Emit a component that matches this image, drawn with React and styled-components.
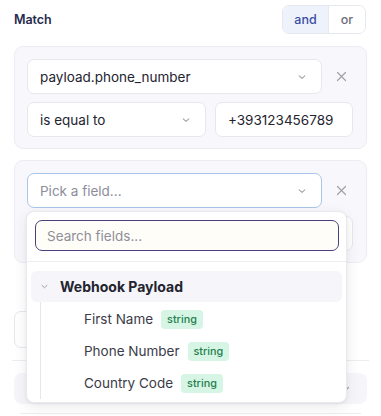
import React from "react";
import styled, { createGlobalStyle } from "styled-components";

const Global = createGlobalStyle`
  html, body { margin: 0; padding: 0; background: #ffffff; }
  body { font-family: Inter, "Noto Sans", sans-serif; color: #1f2030; -webkit-font-smoothing: antialiased; }
  * { box-sizing: border-box; }
`;

const Page = styled.div`
  width: 381px;
  height: 416px;
  overflow: hidden;
  padding: 0 14px;
  display: flex;
  flex-direction: column;
`;

const Header = styled.div`
  height: 37px;
  display: flex;
  align-items: center;
  justify-content: space-between;
  padding-top: 1px;
`;

const Title = styled.div`
  font-size: 12.5px;
  font-weight: 600;
  color: #262a4d;
  letter-spacing: -0.1px;
`;

const Toggle = styled.div`
  display: flex;
  height: 29px;
  border: 1px solid #e6e8f0;
  border-radius: 7px;
  overflow: hidden;
  margin-right: 1px;
`;

const ToggleBtn = styled.div`
  display: flex;
  align-items: center;
  justify-content: center;
  width: ${(p) => p.$w}px;
  font-size: 12.5px;
  font-weight: 500;
  background: ${(p) => (p.$active ? "#eef2fb" : "#ffffff")};
  color: ${(p) => (p.$active ? "#3a4ea6" : "#6d6e7a")};
  border-right: ${(p) => (p.$active ? "1px solid #e6e8f0" : "none")};
`;

const Card = styled.div`
  margin-top: ${(p) => p.$mt}px;
  background: #f8f8fc;
  border: 1px solid #ececf3;
  border-radius: 9px;
  padding: 12px 13px 11px 12px;
  display: flex;
  flex-direction: column;
  gap: 8px;
  position: relative;
  z-index: ${(p) => p.$z || 0};
`;

const Row = styled.div`
  display: flex;
  align-items: center;
  gap: ${(p) => p.$gap || 8}px;
`;

const SelectWrap = styled.div`
  position: relative;
  width: ${(p) => p.$w}px;
`;

const Select = styled.div`
  height: 35px;
  width: 100%;
  background: #ffffff;
  border: 1px solid ${(p) => (p.$focus ? "#a9c5e9" : "#e7e7ee")};
  border-radius: 7px;
  display: flex;
  align-items: center;
  justify-content: space-between;
  padding: 0 14px 0 12px;
  font-size: 13.5px;
  color: ${(p) => (p.$placeholder ? "#8c8d99" : "#23242f")};
`;

const Input = styled.div`
  height: 35px;
  width: ${(p) => p.$w}px;
  background: #ffffff;
  border: 1px solid #e7e7ee;
  border-radius: 7px;
  display: flex;
  align-items: center;
  padding: 0 12px;
  font-size: 13.5px;
  color: #23242f;
`;

const RemoveBtn = styled.div`
  width: 23px;
  height: 23px;
  display: flex;
  align-items: center;
  justify-content: center;
  color: #a0a1ab;
`;

const Dropdown = styled.div`
  position: absolute;
  top: 38px;
  left: -1px;
  width: 321px;
  height: 192px;
  background: #ffffff;
  border: 1px solid #e9e9ef;
  border-radius: 8px;
  box-shadow: 0 4px 14px rgba(30, 30, 60, 0.09), 0 1px 3px rgba(30, 30, 60, 0.06);
  z-index: 10;
  display: flex;
  flex-direction: column;
  overflow: hidden;
`;

const SearchBox = styled.div`
  margin: 8px 7px 0 8px;
  height: 31px;
  border: 1.5px solid #4c407c;
  border-radius: 7px;
  background: #fffdf7;
  display: flex;
  align-items: center;
  padding: 0 11px;
  font-size: 13.5px;
  color: #8e8f9b;
`;

const Divider = styled.div`
  height: 1px;
  background: #ededf2;
  margin-top: ${(p) => p.$mt || 0}px;
`;

const GroupHeader = styled.div`
  margin: 9px 4px 0 4px;
  height: 31px;
  background: #f5f5fa;
  border-radius: 6px;
  display: flex;
  align-items: center;
  padding-left: 9px;
  gap: 11px;
  font-size: 14px;
  font-weight: 700;
  color: #23242f;
`;

const Tree = styled.div`
  margin-left: 13px;
  border-left: 1px solid #e6e6ec;
  display: flex;
  flex-direction: column;
  padding-top: 1px;
`;

const Item = styled.div`
  height: 32px;
  display: flex;
  align-items: center;
  padding-left: 43px;
  gap: 8px;
  font-size: 13.5px;
  color: #3b3c48;
`;

const Badge = styled.span`
  display: inline-flex;
  align-items: center;
  height: 19px;
  padding: 0 6px;
  border-radius: 4px;
  background: #d6f5e4;
  color: #23804e;
  font-size: 10.8px;
  font-weight: 500;
`;

const AddButton = styled.div`
  margin-top: 48px;
  height: 37px;
  width: 140px;
  border: 1px solid #e6e6ec;
  border-radius: 7px;
`;

const Rule = styled.div`
  height: 1px;
  background: #ececf1;
  margin: ${(p) => p.$m};
`;

const Collapsed = styled.div`
  margin-top: 12px;
  height: 31px;
  background: #f6f6fa;
  border-radius: 8px;
  display: flex;
  align-items: center;
  justify-content: flex-end;
  padding-right: 16px;
  color: #a0a1ab;
`;

const Chevron = ({ size = 10, color = "#a3a4ae" }) => (
  <svg width={size} height={size} viewBox="0 0 10 10" fill="none">
    <path d="M2.2 3.8 L5 6.4 L7.8 3.8" stroke={color} strokeWidth="1.1" strokeLinecap="round" strokeLinejoin="round" />
  </svg>
);

const Cross = () => (
  <svg width="11" height="11" viewBox="0 0 11 11" fill="none">
    <path d="M1.5 1.5 L9.5 9.5 M9.5 1.5 L1.5 9.5" stroke="#a0a1ab" strokeWidth="1.2" strokeLinecap="round" />
  </svg>
);

const fields = [
  { name: "First Name", type: "string" },
  { name: "Phone Number", type: "string" },
  { name: "Country Code", type: "string" },
];

export default function App() {
  return (
    <>
      <Global />
      <Page>
        <Header>
          <Title>Match</Title>
          <Toggle>
            <ToggleBtn $active $w={46}>and</ToggleBtn>
            <ToggleBtn $w={36}>or</ToggleBtn>
          </Toggle>
        </Header>

        <Card $mt={9}>
          <Row>
            <SelectWrap $w={296}>
              <Select>
                <span>payload.phone_number</span>
                <Chevron />
              </Select>
            </SelectWrap>
            <RemoveBtn><Cross /></RemoveBtn>
          </Row>
          <Row $gap={9}>
            <SelectWrap $w={179}>
              <Select>
                <span>is equal to</span>
                <Chevron />
              </Select>
            </SelectWrap>
            <Input $w={138}>+393123456789</Input>
          </Row>
        </Card>

        <Card $mt={11} $z={5}>
          <Row>
            <SelectWrap $w={296}>
              <Select $focus $placeholder>
                <span>Pick a field...</span>
                <Chevron />
              </Select>
              <Dropdown>
                <SearchBox>Search fields...</SearchBox>
                <Divider $mt={10} />
                <GroupHeader>
                  <Chevron size={9} color="#9c9da8" />
                  <span>Webhook Payload</span>
                </GroupHeader>
                <Tree>
                  {fields.map((f) => (
                    <Item key={f.name}>
                      <span>{f.name}</span>
                      <Badge>{f.type}</Badge>
                    </Item>
                  ))}
                </Tree>
              </Dropdown>
            </SelectWrap>
            <RemoveBtn><Cross /></RemoveBtn>
          </Row>
          <Row $gap={9}>
            <SelectWrap $w={179}>
              <Select>
                <span />
                <Chevron />
              </Select>
            </SelectWrap>
            <Input $w={138} />
          </Row>
        </Card>

        <AddButton />
        <Rule $m="12px -2px 0 -2px" />
        <Collapsed>
          <Chevron size={12} />
        </Collapsed>
        <Rule $m="9px 6px 0 6px" />
      </Page>
    </>
  );
}
